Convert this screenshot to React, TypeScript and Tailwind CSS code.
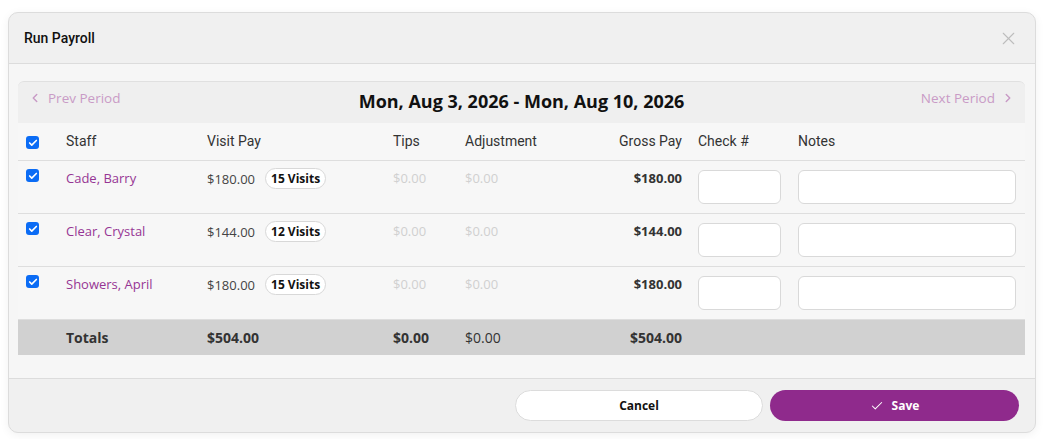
import { Check, ChevronLeft, ChevronRight, X } from "lucide-react"

type Row = { name: string; pay: string; visits: string; gross: string }

const rows: Row[] = [
  { name: "Cade, Barry", pay: "$180.00", visits: "15 Visits", gross: "$180.00" },
  { name: "Clear, Crystal", pay: "$144.00", visits: "12 Visits", gross: "$144.00" },
  { name: "Showers, April", pay: "$180.00", visits: "15 Visits", gross: "$180.00" },
]

const cols = "grid grid-cols-[38px_141px_186px_72px_125px_108px_100px_237px]"

function Box() {
  return (
    <span className="flex h-[13px] w-[13px] items-center justify-center rounded-[3px] bg-[#0b6cf5]">
      <Check className="h-[10px] w-[10px] text-white" strokeWidth={4} />
    </span>
  )
}

export default function App() {
  return (
    <div className="min-h-screen bg-white pl-[8px] pt-[12px] font-['Open_Sans',sans-serif]">
      <div className="w-[1028px] overflow-hidden rounded-[10px] border border-[#dcdcdc] bg-[#f0f0f0] shadow-[0_2px_10px_rgba(0,0,0,0.06)]">
        {/* Header */}
        <div className="flex h-[51px] items-center justify-between border-b border-[#dcdcdc] pl-[15px] pr-[16px]">
          <h1 className="font-['Roboto',sans-serif] text-[14px] font-medium text-[#111]">Run Payroll</h1>
          <X className="h-[21px] w-[21px] text-[#bdbdbd]" strokeWidth={1.3} />
        </div>

        {/* Body */}
        <div className="bg-[#f6f6f6] pb-[23px] pl-[9px] pr-[10px] pt-[17px]">
          <div className="relative flex h-[42px] items-start justify-between rounded-t-[6px] border-t border-[#e0e0e0] bg-[#efefef] px-[10px] pt-[6px] text-[13.5px] text-[#c99bc6]">
            <span className="flex items-center gap-[6px]">
              <ChevronLeft className="h-[14px] w-[14px]" strokeWidth={2.5} />
              Prev Period
            </span>
            <span className="absolute left-1/2 top-[6px] -translate-x-1/2 text-[18px] font-bold text-[#111]">
              Mon, Aug 3, 2026 - Mon, Aug 10, 2026
            </span>
            <span className="flex items-center gap-[6px]">
              Next Period
              <ChevronRight className="h-[14px] w-[14px]" strokeWidth={2.5} />
            </span>
          </div>

          {/* Column headings */}
          <div className={`${cols} h-[38px] items-center border-b border-[#dedede] bg-[#f7f7f7] font-['Roboto',sans-serif] text-[14px] text-[#333]`}>
            <div className="pl-[8px] pt-[2px]"><Box /></div>
            <div className="pl-[10px]">Staff</div>
            <div className="pl-[10px]">Visit Pay</div>
            <div className="pl-[10px]">Tips</div>
            <div className="pl-[10px]">Adjustment</div>
            <div className="pr-[6px] text-right">Gross Pay</div>
            <div className="pl-[10px]">Check #</div>
            <div className="pl-[10px]">Notes</div>
          </div>

          {rows.map((r) => (
            <div key={r.name} className={`${cols} h-[53px] border-b border-[#dedede] bg-[#f7f7f7] pt-[8px] text-[13px] leading-[18px]`}>
              <div className="pl-[8px]"><Box /></div>
              <div className="pl-[10px] text-[#963594]">{r.name}</div>
              <div className="flex items-center gap-[10px] self-start pl-[10px] text-[#444]">
                {r.pay}
                <span className="-mt-[1px] rounded-full border border-[#d8d8d8] bg-white px-[5px] text-[12px] font-bold leading-[19px] text-[#111]">
                  {r.visits}
                </span>
              </div>
              <div className="pl-[10px] text-[#d0d0d0]">$0.00</div>
              <div className="pl-[10px] text-[#d0d0d0]">$0.00</div>
              <div className="pr-[6px] text-right font-bold text-[#333]">{r.gross}</div>
              <div className="pl-[10px] pr-[7px] pt-[1px]">
                <input className="h-[34px] w-full rounded-[6px] border border-[#d9d9d9] bg-white" />
              </div>
              <div className="pl-[10px] pr-[9px] pt-[1px]">
                <input className="h-[34px] w-full rounded-[6px] border border-[#d9d9d9] bg-white" />
              </div>
            </div>
          ))}

          {/* Totals */}
          <div className={`${cols} h-[35px] items-center bg-[#d1d1d1] text-[14px] text-[#333]`}>
            <div />
            <div className="pl-[10px] font-bold">Totals</div>
            <div className="pl-[10px] font-bold">$504.00</div>
            <div className="pl-[10px] font-bold">$0.00</div>
            <div className="pl-[10px]">$0.00</div>
            <div className="pr-[6px] text-right font-bold">$504.00</div>
            <div />
            <div />
          </div>
        </div>

        {/* Footer */}
        <div className="flex justify-end gap-[7px] border-t border-[#dcdcdc] pb-[11px] pr-[16px] pt-[11px]">
          <button className="h-[31px] w-[248px] rounded-full border border-[#dcdcdc] bg-white text-[12px] font-bold text-[#111]">
            Cancel
          </button>
          <button className="flex h-[31px] w-[249px] items-center justify-center gap-[8px] rounded-full bg-[#8f2a8c] text-[12px] font-bold text-white">
            <Check className="h-[14px] w-[14px]" strokeWidth={1.8} />
            Save
          </button>
        </div>
      </div>
    </div>
  )
}
